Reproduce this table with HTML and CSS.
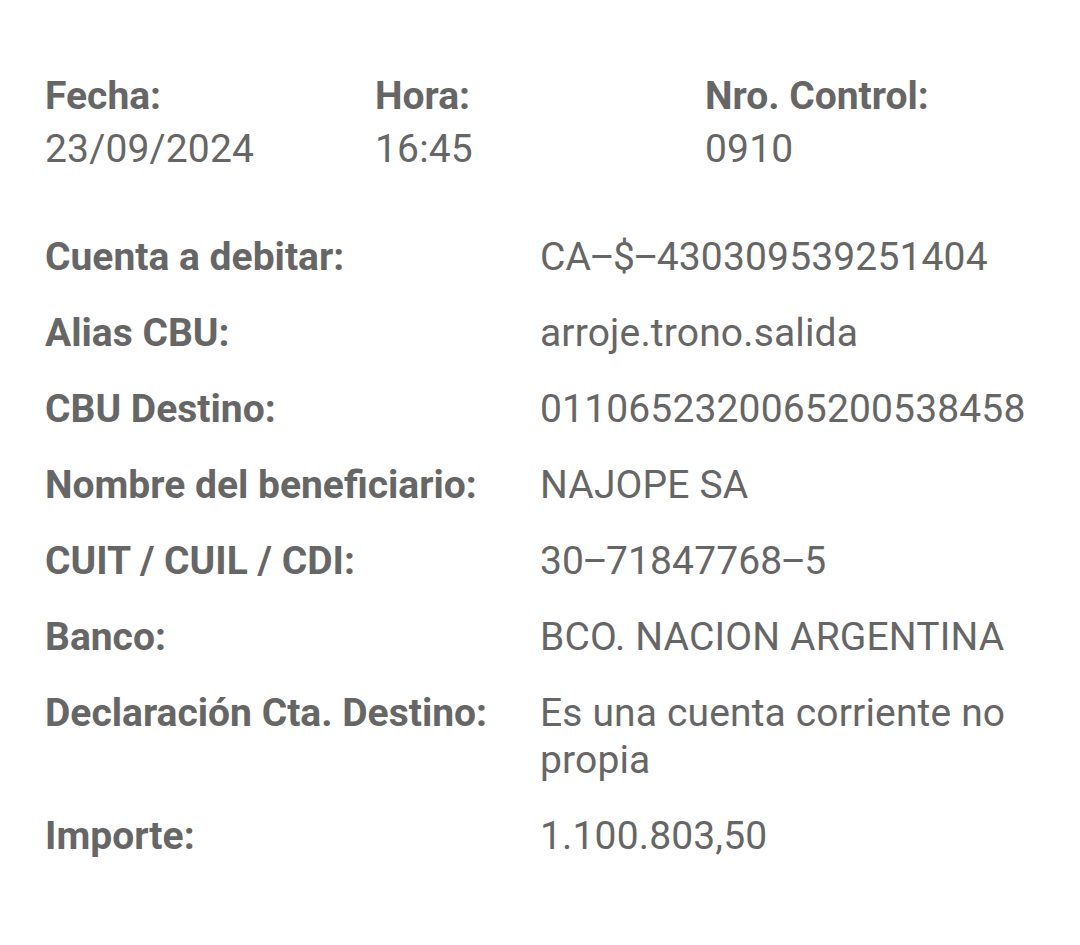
FILE: index.html
```html
<!DOCTYPE html>
<html lang="es">
<head>
<meta charset="utf-8">
<title>Comprobante</title>
<link rel="stylesheet" href="styles.css">
</head>
<body>
<main class="receipt">
  <section class="header">
    <div class="hcol">
      <div class="label">Fecha:</div>
      <div class="value">23/09/2024</div>
    </div>
    <div class="hcol">
      <div class="label">Hora:</div>
      <div class="value">16:45</div>
    </div>
    <div class="hcol">
      <div class="label">Nro. Control:</div>
      <div class="value">0910</div>
    </div>
  </section>
  <section class="details">
    <div class="row"><div class="label">Cuenta a debitar:</div><div class="value">CA<span class="dash">–</span>$<span class="dash">–</span>430309539251404</div></div>
    <div class="row"><div class="label">Alias CBU:</div><div class="value">arroje.trono.salida</div></div>
    <div class="row"><div class="label">CBU Destino:</div><div class="value">0110652320065200538458</div></div>
    <div class="row"><div class="label">Nombre del beneficiario:</div><div class="value">NAJOPE SA</div></div>
    <div class="row"><div class="label">CUIT / CUIL / CDI:</div><div class="value">30<span class="dash">–</span>71847768<span class="dash">–</span>5</div></div>
    <div class="row"><div class="label">Banco:</div><div class="value">BCO. NACION ARGENTINA</div></div>
    <div class="row"><div class="label">Declaración Cta. Destino:</div><div class="value">Es una cuenta corriente no propia</div></div>
    <div class="row"><div class="label">Importe:</div><div class="value">1.100.803,50</div></div>
  </section>
</main>
</body>
</html>
```
FILE: styles.css
```css
html, body {
  margin: 0;
  padding: 0;
  background: #ffffff;
}
body {
  font-family: Roboto, "Liberation Sans", sans-serif;
  font-size: 39px;
  line-height: 47px;
  color: #666666;
}
.receipt {
  padding: 73px 40px 0 45px;
}
.header {
  display: flex;
}
.hcol {
  width: 330px;
  display: flex;
  flex-direction: column;
  gap: 6px;
}
.label {
  font-weight: 700;
}
.value {
  font-weight: 400;
  letter-spacing: 0.15px;
}
.dash {
  margin: 0 -2px;
}
.details {
  margin-top: 61px;
  display: flex;
  flex-direction: column;
  gap: 29px;
}
.row {
  display: grid;
  grid-template-columns: 495px 1fr;
}
```
